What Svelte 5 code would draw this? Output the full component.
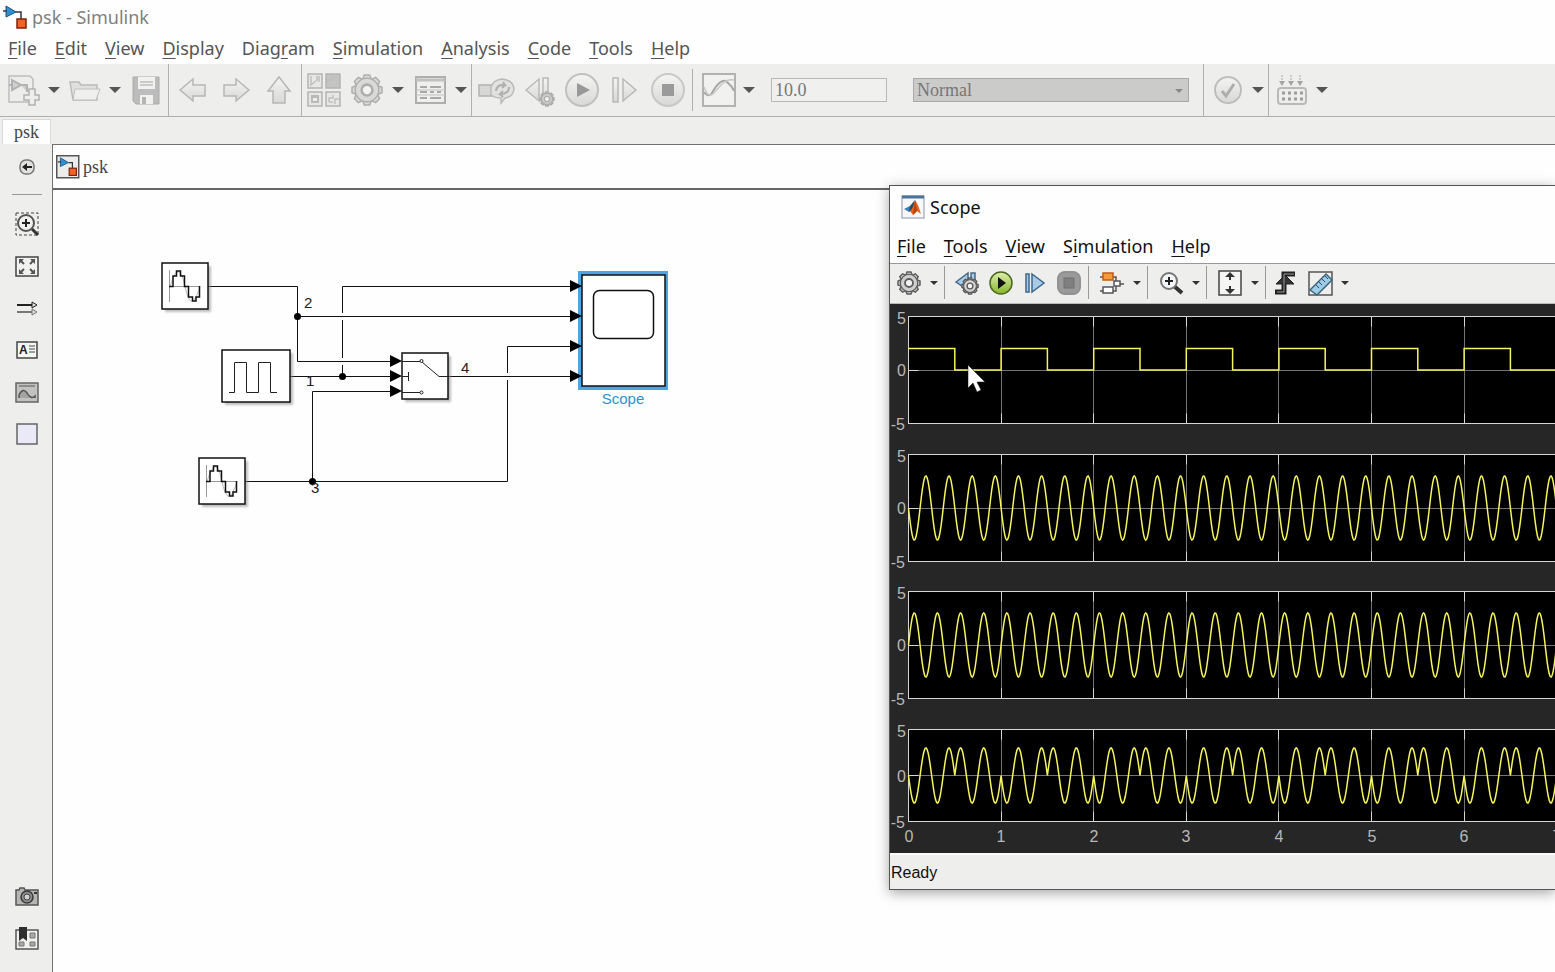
<script>
  const menus = ['_File', '_Edit', '_View', '_Display', 'Diag_ram', '_Simulation', '_Analysis', '_Code', '_Tools', '_Help'];
  const scopeMenus = ['_File', '_Tools', '_View', 'S_imulation', '_Help'];

  const groups = [
    { cls: 'g1', items: ['new', 'caret', 'open', 'caret', 'save'] },
    { cls: 'g2 wide', items: ['left', 'right', 'up'] },
    { cls: 'g3 wide', items: ['library', 'gear', 'caret', 'model', 'caret'] },
    { cls: 'g4 wide short', items: ['fast', 'back', 'play', 'step', 'stop'] }
  ];
  const scopeGroups = [
    ['gear', 'caret'],
    ['sback', 'splay', 'sstep', 'sstop'],
    ['blocks', 'caret'],
    ['zoom', 'caret'],
    ['fit', 'caret'],
    ['trigger', 'ruler', 'caret']
  ];
  const palette = ['zoomfit', 'expand', 'arrows', 'text', 'image', 'area'];
  const names = {
    new: 'New model', open: 'Open', save: 'Save', left: 'Back', right: 'Forward', up: 'Up to parent',
    library: 'Library browser', gear: 'Configuration', model: 'Model explorer', fast: 'Fast restart',
    back: 'Step back', play: 'Run', step: 'Step forward', stop: 'Stop', caret: 'More options',
    sback: 'Step back', splay: 'Run', sstep: 'Step forward', sstop: 'Stop', blocks: 'Highlight block',
    zoom: 'Zoom', fit: 'Scale axes', trigger: 'Triggers', ruler: 'Cursor measurements',
    zoomfit: 'Zoom', expand: 'Fit to view', arrows: 'Sample time', text: 'Annotation', image: 'Image', area: 'Area',
    hide: 'Hide browser', camera: 'Screenshot', bookmark: 'Viewmarks', viewer: 'Simulation data', check: 'Advisor', build: 'Build'
  };

  function split(label) {
    const i = label.indexOf('_');
    return [label.slice(0, i), label[i + 1], label.slice(i + 2)];
  }

  const unit = 92.6;
  const x0 = 18.5;
  let scopeWidth = $state(666);
  let count = $derived(Math.floor((scopeWidth - x0) / unit) + 1);
  let seconds = $derived(Array.from({ length: count }, (_, i) => i));
  // The next label starts just left of its tick, so it can peek in at the right edge.
  let labels = $derived(Array.from({ length: Math.floor((scopeWidth - x0 + 4) / unit) + 1 }, (_, i) => i));

  const wave = (t) => 3 * Math.sin(8 * Math.PI * t);
  const plots = [
    { top: 12.5, height: 107, fn: null },
    { top: 150.5, height: 107, fn: (t) => -wave(t) },
    { top: 287.5, height: 107, fn: wave },
    { top: 425.5, height: 92, fn: (t) => (t % 1 < 0.5 ? -wave(t) : wave(t)) }
  ];

  function trace(p, n) {
    const y = (v) => (p.top + p.height / 2 - (v * p.height) / 10).toFixed(2);
    let d = '';
    if (!p.fn) {
      for (let s = 0; s < n; s++) {
        const a = x0 + s * unit;
        const b = a + unit / 2;
        d += `${s ? 'L' : 'M'}${a} ${y(s ? 0 : 2)}L${a} ${y(2)}L${b} ${y(2)}L${b} ${y(0)}L${a + unit} ${y(0)}`;
      }
      return d;
    }
    for (let i = 0; i <= n * 100; i++) {
      const t = i / 100;
      d += `${i ? 'L' : 'M'}${(x0 + t * unit).toFixed(2)} ${y(p.fn(t))}`;
    }
    return d;
  }

  const teeth = Array.from({ length: 8 }, (_, i) => i * 45);
</script>

{#snippet gearShape(r, fill, stroke)}
  <g fill={fill} stroke={stroke} stroke-width="1.5">
    {#each teeth as a}
      <path transform="rotate({a})" d="M{-r * 0.28} {-r * 0.74}L{-r * 0.18} {-r}H{r * 0.18}L{r * 0.28} {-r * 0.74}" />
    {/each}
    <circle r={r * 0.78} />
    <circle r={r * 0.72} stroke="none" />
    <circle r={r * 0.36} stroke-width={r * 0.17} fill="#f4f4f4" />
  </g>
{/snippet}

{#snippet glyph(name)}
  {#if name === 'new'}
    <path d="M-15-14H6L9-11V12H-15Z" fill="#ededeb" stroke="#b5b5b5" stroke-width="1.5" />
    <path d="M-12-10L-3-5L-12 0ZM-15-5H-12M-3-5H3V2" fill="#cacaca" stroke="#a8a8a8" stroke-width="2" />
    <path d="M5-1H11V5H15V10H11V15H5V10H0V5H5Z" fill="#eee" stroke="#a8a8a8" stroke-width="1.5" />
  {:else if name === 'open'}
    <path d="M-15-8H-6L-4-5H12V10H-12Z" fill="#dededc" stroke="#b3b3b3" stroke-width="1.5" />
    <path d="M-10-1H15L11 10H-12Z" fill="#f0f0ee" stroke="#b8b8b8" />
  {:else if name === 'save'}
    <path d="M-13-13H13V14H-10L-13 11Z" fill="#b4b4b4" stroke="#a0a0a0" />
    <path d="M-8-13H9V-1H-8ZM-6 5H7V14H-6Z" fill="#f2f2f0" />
    <path d="M-6-8H7M-6-5H7" stroke="#999" />
    <path d="M-4 7H0V14H-4Z" fill="#aaa" />
  {:else if name === 'left'}
    <path d="M-13 0L0-11V-5H12V6H0V11Z" fill="url(#soft)" stroke="#adadad" stroke-width="1.5" />
  {:else if name === 'right'}
    <path d="M13 0L0-11V-5H-12V6H0V11Z" fill="url(#soft)" stroke="#adadad" stroke-width="1.5" />
  {:else if name === 'up'}
    <path d="M0-13L11 1H6V13H-6V1H-11Z" fill="url(#soft)" stroke="#adadad" stroke-width="1.5" />
  {:else if name === 'library'}
    <path d="M-16-16H-2V-2H-16ZM-16 2H-2V16H-16ZM2 2H16V16H2Z" fill="#e6e6e4" stroke="#aaa" stroke-width="1.5" />
    <path d="M2-16H16V-2H2Z" fill="#bdbdbd" stroke="#aaa" stroke-width="1.5" />
    <path d="M4-8Q9-14 14-13M-13-14V-5L-7-10V-14M-5-14V-8M5 12V8H9V5M11 14V9H15M5 12H9" fill="none" stroke="#b8b8b8" stroke-width="1.5" />
    <rect x="-13" y="5" width="8" height="8" fill="#b0b0b0" />
    <rect x="-11" y="8" width="4" height="3" fill="#eee" />
  {:else if name === 'gear'}
    {@render gearShape(15, '#d6d6d4', '#a4a4a4')}
  {:else if name === 'model'}
    <rect x="-14" y="-13" width="29" height="26" fill="#f0f0ee" stroke="#a4a4a4" stroke-width="2" />
    <path d="M-14-10H15" stroke="#b8b8b8" stroke-width="3" />
    <path d="M-10-3H-3M0-3H11M-10 2H-3M0 2H4M7 2H11M-10 8H-3M0 8H11" stroke="#9c9c9c" stroke-width="2" />
    <path d="M-14 0H15M-14 5H15" stroke="#bbb" />
  {:else if name === 'fast'}
    <path d="M-17-5H-4V6H-17Z" fill="#d4d4d2" stroke="#a8a8a8" stroke-width="1.5" />
    <path d="M-5 5V-3Q-3-10 6-11Q17-10 18-1Q17 7 9 8L5 13V8Q-1 8-5 5Z" fill="#e0e0de" stroke="#b2b2b2" stroke-width="1.5" />
    <path d="M0 1Q1-6 9-5L7-8M9-5L6-2M13-3Q13 4 4 4L7 1M4 4L7 7" fill="none" stroke="#a6a6a6" stroke-width="2" />
  {:else if name === 'back'}
    <path d="M-13 0L0-11V11ZM4-12H9V7H4Z" fill="url(#soft)" stroke="#b0b0b0" stroke-width="1.5" />
    <g transform="translate(8 9)">{@render gearShape(7, '#c4c4c2', '#a2a2a2')}</g>
  {:else if name === 'play'}
    <circle r="16" fill="url(#soft)" stroke="#b9b9b9" stroke-width="2" />
    <path d="M-5-7L8 0L-5 7Z" fill="#8a8a8a" />
  {:else if name === 'step'}
    <path d="M-12-12H-7V12H-12ZM-2-11L11 0L-2 11Z" fill="url(#soft)" stroke="#b0b0b0" stroke-width="1.5" />
  {:else if name === 'stop'}
    <circle r="16" fill="url(#soft)" stroke="#c2c2c2" stroke-width="2" />
    <rect x="-6" y="-6" width="12" height="12" fill="#8c8c8c" />
  {:else if name === 'viewer'}
    <rect x="-16" y="-16" width="32" height="32" fill="#f2f2f0" stroke="#a8a8a8" stroke-width="2" />
    <path d="M-15 2Q-11 8-7 3Q2-13 8-8Q13-4 15 1" fill="none" stroke="#999" stroke-width="2" />
    <path d="M-15-3Q-11 8-6 4L3-6Q8-11 15-10" fill="none" stroke="#c2c2c2" stroke-width="1.5" />
  {:else if name === 'check'}
    <circle r="13" fill="url(#soft)" stroke="#b6b6b6" stroke-width="2" />
    <path d="M-6 1L-2 6L6-6" fill="none" stroke="#a4a4a4" stroke-width="3" />
  {:else if name === 'build'}
    <rect x="-14" y="-2" width="28" height="16" rx="3" fill="#eee" stroke="#b0b0b0" stroke-width="2" />
    <path d="M-10 3H11M-10 9H11" stroke="#909090" stroke-width="3" stroke-dasharray="3 3" />
    <path d="M-10-15V-9M-1-15V-9M8-15V-9" stroke="#a0a0a0" stroke-dasharray="2 1" />
    <path d="M-13-9H-7L-10-4ZM-4-9H2L-1-4ZM5-9H11L8-4Z" fill="#989898" />
  {/if}
{/snippet}

{#snippet scopeGlyph(name)}
  {#if name === 'gear'}
    {@render gearShape(11, '#cfcfcf', '#5e5e5e')}
  {:else if name === 'sback'}
    <path d="M-11-1L1-10V7ZM4-10H8V3H4Z" fill="#a9cce6" stroke="#44698a" stroke-width="1.5" />
    <g transform="translate(3 3)">{@render gearShape(8, '#d4d4d4', '#5a5a5a')}</g>
  {:else if name === 'splay'}
    <circle r="11" fill="url(#green)" stroke="#4c6620" stroke-width="1.5" />
    <path d="M-3-6L5 0L-3 6Z" fill="#111" />
  {:else if name === 'sstep'}
    <path d="M-9-9H-6V9H-9ZM-3-9L9 0L-3 9Z" fill="#a9cce6" stroke="#3d668c" stroke-width="1.5" />
  {:else if name === 'sstop'}
    <rect x="-12" y="-12" width="24" height="24" rx="8" fill="#9a9a9a" />
    <rect x="-11" y="-11" width="22" height="22" rx="7" fill="none" stroke="#8a8a8a" />
    <rect x="-5" y="-5" width="10" height="10" fill="#7f7f7f" stroke="#717171" />
  {:else if name === 'blocks'}
    <path d="M-12-6H4V0M-12 8H4V3M8 1H12" fill="none" stroke="#555" stroke-width="1.5" />
    <rect x="-9" y="-10" width="10" height="7" fill="#f59a3c" stroke="#c05c10" stroke-width="1.5" />
    <rect x="2" y="-2" width="6" height="5" fill="#fff" stroke="#555" stroke-width="1.5" />
    <rect x="-9" y="4" width="10" height="6" fill="#fff" stroke="#555" stroke-width="1.5" />
  {:else if name === 'zoom'}
    <path d="M3 3L11 10" stroke="#333" stroke-width="4" />
    <circle cx="-2" cy="-2" r="8" fill="#f4f7fa" stroke="#777" stroke-width="2" />
    <path d="M-6-2H2M-2-6V2" stroke="#222" stroke-width="2" />
  {:else if name === 'fit'}
    <rect x="-11" y="-12" width="22" height="24" fill="#f5f5f3" stroke="#444" stroke-width="1.5" />
    <path d="M-5-6L0-11L5-6ZM-5 6L0 11L5 6Z" fill="#333" />
    <path d="M0-7V-3M0 7V3" stroke="#333" stroke-width="2" />
  {:else if name === 'trigger'}
    <path d="M-11 9H-2V-9H9" fill="none" stroke="#222" stroke-width="5" />
    <path d="M-10 1L-1-8L8 1Z" fill="#333" stroke="#222" />
    <path d="M-9 9H-2V-9H8" fill="none" stroke="#999" />
  {:else if name === 'ruler'}
    <rect x="-11" y="-11" width="23" height="23" fill="#efefed" stroke="#555" stroke-width="1.5" />
    <path d="M-10 7L6-9L12-3L-3 12Z" fill="#9ccbe6" stroke="#41657e" stroke-width="1.5" />
    <path d="M-4 2L-1 5M-1-1L2 2M2-4L5-1M5-7L8-4" stroke="#2c4d66" />
  {/if}
{/snippet}

{#snippet sideGlyph(name)}
  {#if name === 'hide'}
    <rect x="-7" y="-7" width="14" height="14" rx="6" fill="#e2e2e0" stroke="#777" stroke-width="1.5" />
    <path d="M-5 0L0-4V-1H5V1H0V4Z" fill="#222" />
  {:else if name === 'zoomfit'}
    <rect x="-11" y="-11" width="22" height="22" fill="none" stroke="#444" stroke-dasharray="3 2" />
    <path d="M5 5L11 11" stroke="#333" stroke-width="3" />
    <circle cx="-1" cy="-1" r="8" fill="#f1f1ef" stroke="#555" stroke-width="2" />
    <path d="M-5-1H3M-1-5V3" stroke="#222" stroke-width="2" />
  {:else if name === 'expand'}
    <rect x="-11" y="-9" width="22" height="19" fill="#f2f2f0" stroke="#444" stroke-width="1.5" />
    <path d="M-8-7H-3L-8-2ZM8-7H3L8-2ZM-8 8H-3L-8 3ZM8 8H3L8 3Z" fill="#555" />
    <path d="M-7-6L-3-2M7-6L3-2M-7 7L-3 3M7 7L3 3" stroke="#555" stroke-width="2" />
  {:else if name === 'arrows'}
    <path d="M-10-3H6" stroke="#222" stroke-width="2" />
    <path d="M-10 4H6" stroke="#777" stroke-width="2" />
    <path d="M5-6L10-3L5 0Z" fill="#ddd" stroke="#222" />
    <path d="M5 1L10 4L5 7Z" fill="#ddd" stroke="#777" />
  {:else if name === 'text'}
    <rect x="-10" y="-8" width="20" height="16" fill="#f6f6f4" stroke="#444" stroke-width="1.5" />
    <path d="M2-4H8M2-1H8M2 2H8" stroke="#444" />
    <text x="-8" y="4" font-size="12" font-weight="700" font-family="Liberation Sans, sans-serif" fill="#222">A</text>
  {:else if name === 'image'}
    <rect x="-11" y="-9" width="22" height="19" fill="#c2c2c0" stroke="#666" stroke-width="1.5" />
    <path d="M-8-6H8" stroke="#8c8c8c" stroke-width="2" />
    <path d="M-8 6V3Q-4-5 0 1Q4 8 8 4V6" fill="#a4a4a2" stroke="#555" stroke-width="1.5" />
  {:else if name === 'area'}
    <rect x="-10" y="-10" width="20" height="20" fill="#e9e9f7" stroke="#666" stroke-width="1.5" />
  {:else if name === 'camera'}
    <path d="M-11-7H-8L-7-9H-3L-2-7H11V8H-11Z" fill="#b5b5b3" stroke="#555" stroke-width="1.5" />
    <circle r="6" fill="#8d8d8d" stroke="#3a3a3a" stroke-width="1.5" />
    <circle r="3" fill="#d2d2d2" stroke="#444" />
    <path d="M7-4H10" stroke="#333" stroke-width="2" />
  {:else if name === 'bookmark'}
    <rect x="-11" y="-9" width="22" height="19" fill="#f0f0ee" stroke="#555" stroke-width="1.5" />
    <path d="M3-6H8V-1H3ZM3 3H8V7H3ZM-8 3H-3V7H-8Z" fill="#aaa" stroke="#777" />
    <path d="M-8-12H0V2L-4-1L-8 2Z" fill="#2e2e2e" />
  {/if}
{/snippet}

{#snippet caret(w)}
  <svg width={w} height="6" viewBox="0 0 12 6" aria-hidden="true"><path d="M0 0H12L6 6Z" fill="currentColor" /></svg>
{/snippet}

{#snippet tool(name)}
  {#if name === 'caret'}
    <button class="caret" aria-label={names[name]}>{@render caret(12)}</button>
  {:else}
    <button class="tool" aria-label={names[name]}>
      <svg width="38" height="36" viewBox="-19 -18 38 36" aria-hidden="true">{@render glyph(name)}</svg>
    </button>
  {/if}
{/snippet}

{#snippet side(name)}
  <button class="side-button" aria-label={names[name]}>
    <svg width="28" height="28" viewBox="-14 -14 28 28" aria-hidden="true">{@render sideGlyph(name)}</svg>
  </button>
{/snippet}

{#snippet modelMark()}
  <path d="M3 1L13 7L3 12Z" fill="#2f8fd0" stroke="#14507c" />
  <path d="M0 6H4M13 7H18V14" fill="none" stroke="#334" stroke-width="1.5" />
  <rect x="14" y="14" width="9" height="9" fill="#f0642a" stroke="#7c2408" stroke-width="1.5" />
{/snippet}

{#snippet block(x, y, w, h)}
  <rect x={x + 3} y={y + 3} width={w} height={h} fill="#8a8a8a" opacity=".55" filter="url(#blur)" />
  <rect {x} {y} width={w} height={h} fill="#fff" stroke="#111" stroke-width="1.5" />
{/snippet}

{#snippet sineBlock(x, y)}
  {@render block(x, y, 46, 46)}
  <g transform="translate({x} {y})" fill="none">
    <path d="M7.5 7V39M7 23.5H38" stroke="#999" />
    <path d="M8 23.5Q17-6 23 23.5T38 23.5" stroke="#bbb" />
    <path d="M7 23.5H11V13H14.5V8H18.5V13H22.5V23.5H26.5V34H30.5V38H34V34H37.5V23" stroke="#111" stroke-width="1.5" />
  </g>
{/snippet}

<svg class="defs" width="0" height="0" aria-hidden="true">
  <defs>
    <linearGradient id="soft" x1="0" y1="0" x2="0" y2="1">
      <stop offset="0" stop-color="#f6f6f4" /><stop offset="1" stop-color="#d4d4d2" />
    </linearGradient>
    <linearGradient id="green" x1="0" y1="0" x2="0" y2="1">
      <stop offset="0" stop-color="#dff0ae" /><stop offset="1" stop-color="#86b52c" />
    </linearGradient>
    <filter id="blur" x="-20%" y="-20%" width="140%" height="140%"><feGaussianBlur stdDeviation="1.2" /></filter>
  </defs>
</svg>

<div class="app">
  <header class="titlebar">
    <svg width="25" height="25" viewBox="0 0 25 25" aria-hidden="true">{@render modelMark()}</svg>
    <h1>psk - Simulink</h1>
  </header>

  <nav class="menubar main-menu" aria-label="Simulink">
    {#each menus as m}
      {@const [a, b, c] = split(m)}
      <button>{a}<u>{b}</u>{c}</button>
    {/each}
  </nav>

  <div class="toolbar" role="toolbar" aria-label="Model">
    {#each groups as g}
      <div class="group {g.cls}">
        {#each g.items as item}{@render tool(item)}{/each}
      </div>
    {/each}
    <div class="group g5">
      {@render tool('viewer')}
      {@render tool('caret')}
      <input class="stop-time" aria-label="Stop time" value="10.0" />
      <div class="mode">
        <select aria-label="Simulation mode"><option>Normal</option></select>
        <span class="mode-arrow">{@render caret(8)}</span>
      </div>
    </div>
    <div class="group g6">{@render tool('check')}{@render tool('caret')}</div>
    <div class="group g7">{@render tool('build')}{@render tool('caret')}</div>
  </div>

  <div class="tabs"><button class="tab">psk</button></div>

  <div class="workspace">
    <aside class="side">
      {@render side('hide')}
      <hr />
      {#each palette as p}{@render side(p)}{/each}
      <div class="spacer"></div>
      {@render side('camera')}
      {@render side('bookmark')}
    </aside>

    <main class="editor">
      <div class="crumbs">
        <svg width="24" height="24" viewBox="0 0 24 24" aria-hidden="true">
          <rect x="0.75" y="0.75" width="22" height="22" fill="#ececea" stroke="#555" stroke-width="1.5" />
          <g transform="translate(2 2) scale(.8)">{@render modelMark()}</g>
        </svg>
        <span>psk</span>
      </div>
      <svg class="canvas" role="img" aria-label="Block diagram of psk">
        <g transform="translate(-53 -190)">
          <g fill="none" stroke="#111">
            <path d="M208 286.5H297.5V361.5H392M297.5 316.5H572M290 376.5H392M342.5 376V365M342.5 358V320M342.5 313V286.5H572" />
            <path d="M245 481.5H507.5V380M507.5 373V346.5H572M312.5 481V391.5H392M448 376.5H572" />
          </g>
          <g fill="#000">
            <circle cx="297.5" cy="316.5" r="3.5" />
            <circle cx="342.5" cy="376.5" r="3.5" />
            <circle cx="312.5" cy="481.5" r="3.5" />
          </g>
          {@render sineBlock(162, 263)}
          {@render sineBlock(199, 458)}
          {@render block(222, 350, 68, 52)}
          <path d="M229 392.5H234.5V362.5H246.5V392.5H258.5V362.5H270.5V392.5H277" fill="none" stroke="#222" />
          {@render block(402, 353, 46, 46)}
          <g fill="none" stroke="#222">
            <path d="M402 361.5H420M422 362L439 376.5H448M402 376.5H409M408.5 372V381M402 392.5H420" />
            <circle cx="421.5" cy="361" r="1.5" /><circle cx="421.5" cy="392.5" r="1.5" />
          </g>
          <rect x="580" y="273" width="86" height="115" fill="#fff" stroke="#4fa5e2" stroke-width="4" />
          <rect x="582" y="275" width="83" height="111" fill="#fff" stroke="#111" stroke-width="1.5" />
          <rect x="593.5" y="290.5" width="60" height="48" rx="6" fill="#fff" stroke="#111" stroke-width="1.5" />
          <g fill="#000">
            {#each [361, 376, 391] as y}<path d="M390 {y - 6}L402 {y}L390 {y + 6}Z" />{/each}
            {#each [286, 316, 346, 376] as y}<path d="M570 {y - 6}L582 {y}L570 {y + 6}Z" />{/each}
          </g>
          <g class="signal">
            <text x="304" y="308">2</text><text x="306" y="386">1</text>
            <text x="311" y="493">3</text><text x="461" y="373">4</text>
            <text class="block-name" x="623" y="404" text-anchor="middle">Scope</text>
          </g>
        </g>
      </svg>
    </main>
  </div>

  <section class="scope" aria-label="Scope" bind:clientWidth={scopeWidth}>
    <header class="scope-title">
      <svg width="24" height="24" viewBox="0 0 24 24" aria-hidden="true">
        <rect x="1" y="1" width="22" height="22" fill="#f6f8fa" stroke="#8795a5" />
        <path d="M1 2H23" stroke="#4d7397" stroke-width="3" />
        <path d="M3 14L9 11L12 13L8 17Z" fill="#3b7db5" />
        <path d="M9 11L14 5L12 14L8 17Z" fill="#27496b" />
        <path d="M14 5Q17 9 20 19L16 16L12 20L9 16Q12 14 14 5Z" fill="#e2601c" />
        <path d="M14 5L16 16L12 20Z" fill="#b8410f" />
      </svg>
      <h2>Scope</h2>
    </header>
    <nav class="menubar scope-menu" aria-label="Scope">
      {#each scopeMenus as m}
        {@const [a, b, c] = split(m)}
        <button>{a}<u>{b}</u>{c}</button>
      {/each}
    </nav>
    <div class="scope-tools" role="toolbar" aria-label="Scope">
      {#each scopeGroups as items}
        <div class="scope-group">
          {#each items as item}
            {#if item === 'caret'}
              <button class="scaret" aria-label={names.caret}>{@render caret(8)}</button>
            {:else}
              <button class="stool" aria-label={names[item]}>
                <svg width="28" height="28" viewBox="-14 -14 28 28" aria-hidden="true">{@render scopeGlyph(item)}</svg>
              </button>
            {/if}
          {/each}
        </div>
      {/each}
    </div>
    <svg class="plots" role="img" aria-label="Four signal traces">
      {#each plots as p}
        <rect x={x0} y={p.top} width={count * unit} height={p.height} fill="#000" />
        {#each seconds as s}
          {@const x = Math.floor(x0 + s * unit) + 0.5}
          <path d="M{x} {p.top}V{p.top + p.height}" stroke="#747474" />
          <path d="M{x} {p.top}v10M{x} {p.top + p.height}v-10" stroke="#d6d6d6" />
        {/each}
        <path d="M{x0} {Math.floor(p.top + p.height / 2) + 0.5}h{count * unit}" stroke="#747474" />
        <path d="M{x0} {Math.floor(p.top + p.height / 2) + 0.5}h10" stroke="#d6d6d6" />
        <rect x={x0} y={p.top} width={count * unit} height={p.height} fill="none" stroke="#d6d6d6" />
        <path d={trace(p, count)} fill="none" stroke="#f6f55c" stroke-width="1.5" />
        <g class="axis" text-anchor="end">
          <text x="16" y={p.top + 7}>5</text>
          <text x="16" y={p.top + p.height / 2 + 6}>0</text>
          <text x="15" y={p.top + p.height + 6}>-5</text>
        </g>
      {/each}
      <g class="axis" text-anchor="middle">
        {#each labels as s}<text x={Math.round(x0 + s * unit)} y="538">{s}</text>{/each}
      </g>
      <path d="M78 61V84L83 79L87 88L91 86L87 78H95Z" fill="#fff" stroke="#111" stroke-width=".5" />
    </svg>
    <footer class="status">Ready</footer>
  </section>
</div>

<style>
  :global(body) { margin: 0; overflow: hidden; }
  .defs { position: absolute; }
  .app {
    position: relative;
    min-height: 100vh;
    display: flex;
    flex-direction: column;
    overflow: hidden;
    background: #fefefe;
    font-family: 'Noto Sans', sans-serif;
    font-size: 18px;
    color: #555;
  }
  .app * { box-sizing: border-box; }
  button { border: 0; padding: 0; background: none; color: inherit; font: inherit; }
  h1, h2 { margin: 0; font-size: 18px; font-weight: 400; line-height: 24px; }
  svg { display: block; flex: none; }

  .titlebar { height: 34px; display: flex; align-items: center; gap: 4px; padding-left: 3px; }
  h1 { color: #808080; }
  .menubar { display: flex; gap: 18px; align-items: center; }
  .menubar button { line-height: 24px; white-space: nowrap; }
  .menubar u { text-underline-offset: 3px; text-decoration-thickness: 1px; text-decoration-skip-ink: none; }
  .main-menu { height: 30px; padding: 0 0 2px 8px; }

  .toolbar { display: flex; height: 53px; background: #eeeeec; border-bottom: 1px solid #b0b0b0; }
  .toolbar .tool { opacity: 0.85; }
  .group { display: flex; align-items: center; border-right: 1px solid #b0b0b0; }
  .tool { width: 41px; display: flex; justify-content: center; }
  .wide .tool { width: 43px; }
  .caret { width: 20px; height: 30px; display: flex; align-items: center; justify-content: center; }
  .g1 { padding: 0 2px 0 3px; }
  .g2 { padding: 0 1px 0 2px; }
  .g4 { padding: 0 3px 0 2px; }
  .short { margin: 5px 0; }
  .g5 { padding: 0 14px 0 5px; }
  .g6 { padding-left: 3px; }
  .g7 { padding-left: 2px; border-right: 0; }
  .stop-time, .mode select {
    height: 24px; border: 1px solid #b8b8b8; border-radius: 0; padding: 0 3px;
    font: 18px/22px 'Liberation Serif', serif; color: #777; background: #f0f0ee;
  }
  .stop-time { width: 116px; margin: 0 26px 0 12px; }
  .mode { position: relative; width: 276px; }
  .mode select { display: block; width: 100%; appearance: none; background: #cbcbc9; border-color: #aaa; }
  .mode-arrow { position: absolute; right: 6px; top: 10px; color: #888; pointer-events: none; }

  .tabs { height: 27px; display: flex; align-items: flex-end; padding-left: 2px; background: #eeeeec; }
  .tab {
    height: 25px; width: 49px; background: #fefefe; border: 1px solid #d8d8d8; border-bottom: 0;
    font: 18px/22px 'Liberation Serif', serif; color: #444;
  }

  .workspace { flex: 1; display: flex; }
  .side {
    width: 52px; display: flex; flex-direction: column; align-items: center;
    padding: 2px 0 12px 2px; background: #eeeeec;
  }
  .side-button { height: 42px; width: 42px; display: flex; align-items: center; justify-content: center; }
  .side hr { width: 30px; margin: 6px 0 8px; border: 0; border-top: 1px solid #999; }
  .spacer { flex: 1; }
  .editor {
    flex: 1; min-width: 0; display: flex; flex-direction: column;
    border-top: 1px solid #707070; border-left: 1px solid #707070;
  }
  .crumbs {
    height: 45px; display: flex; align-items: center; gap: 3px; padding-left: 3px;
    border-bottom: 2px solid #666; color: #444; font: 18px/22px 'Liberation Serif', serif;
  }
  .canvas { flex: 1; width: 100%; }
  .signal { font: 15px 'Liberation Sans', sans-serif; fill: #222; }
  .block-name { fill: #2d93cb; }

  .scope {
    position: absolute; left: 889px; right: 0; top: 185px;
    background: #fefefe; color: #111;
    border: 1px solid #555; border-right: 0;
    box-shadow: 0 3px 12px rgba(0, 0, 0, 0.35);
  }
  .scope-title { height: 42px; display: flex; align-items: center; gap: 5px; padding-left: 11px; }
  .scope-menu { height: 35px; padding-left: 7px; }
  .scope-tools {
    display: flex; height: 41px; padding: 2px 0 4px; background: #eeeeec;
    border-top: 1px solid #999; border-bottom: 1px solid #bbb;
  }
  .scope-group { display: flex; align-items: center; padding: 0 2px 0 6px; border-right: 1px solid #999; }
  .scope-group:nth-child(1) { padding-left: 2px; }
  .scope-group:nth-child(2) { padding-left: 5px; }
  .scope-group:last-child { padding-left: 3px; border: 0; }
  .stool { width: 34px; display: flex; justify-content: center; }
  .scaret { width: 16px; height: 24px; display: flex; align-items: center; justify-content: center; color: #333; }
  .plots { width: 100%; height: 549px; background: #262626; }
  .axis { font: 16px 'Liberation Sans', sans-serif; fill: #b8b8b8; }
  .status {
    height: 36px; padding-left: 1px; background: #eeeeec; border-top: 2px solid #fafafa;
    font: 16px/36px 'Liberation Sans', sans-serif;
  }
</style>
